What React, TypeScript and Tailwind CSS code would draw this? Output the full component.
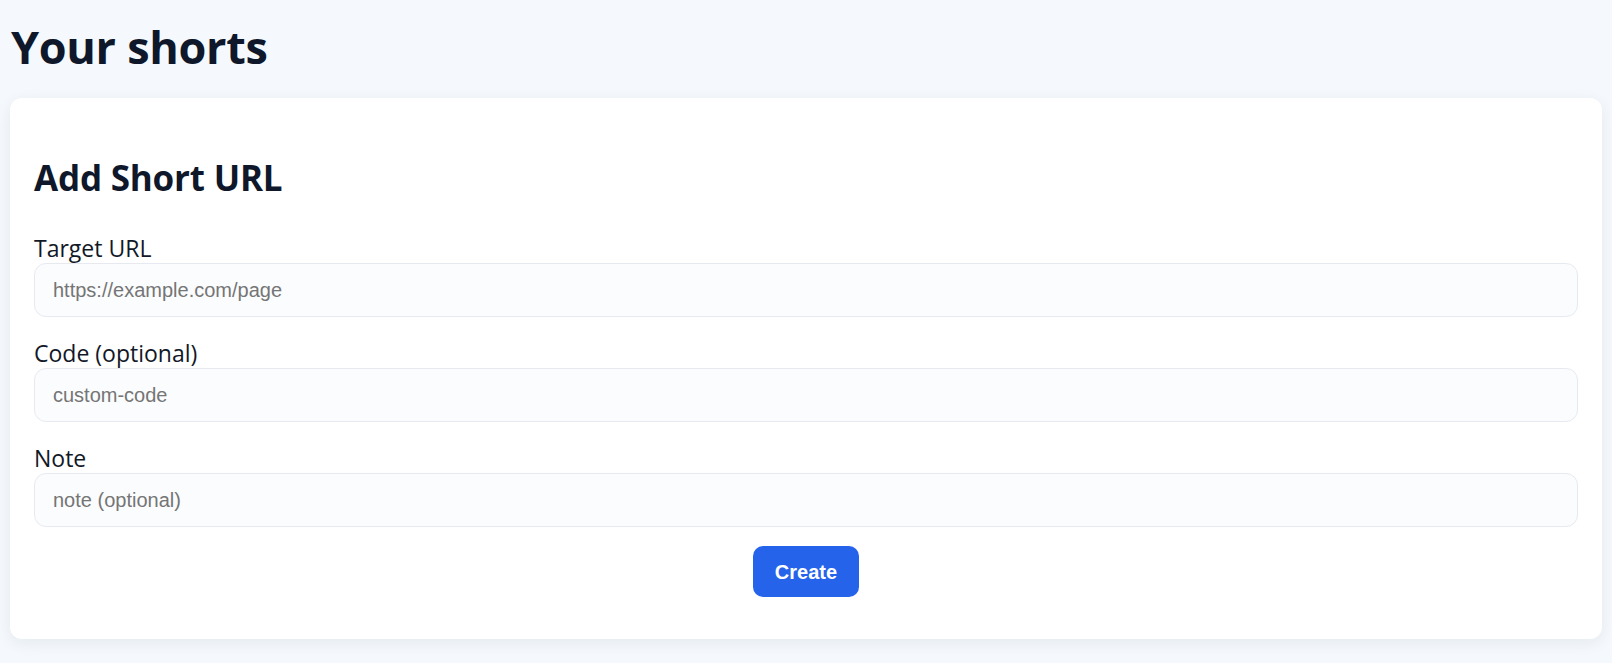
import { useState } from 'react';

const fields = [
  { id: 'target', label: 'Target URL', placeholder: 'https://example.com/page' },
  { id: 'code', label: 'Code (optional)', placeholder: 'custom-code' },
  { id: 'note', label: 'Note', placeholder: 'note (optional)' },
];

const App = () => {
  const [values, setValues] = useState<Record<string, string>>({ target: '', code: '', note: '' });

  return (
    <div className="min-h-screen bg-[#f5f9fd] px-[10px] pt-[20px] font-['Open_Sans',sans-serif] text-[#0f172a]">
      <h1 className="pl-[1px] text-[45px] font-bold leading-[54px] tracking-[-0.3px]">Your shorts</h1>

      <div className="mt-[24px] rounded-[12px] bg-white px-[24px] pt-[24px] pb-[42px] shadow-[0_4px_16px_rgba(15,23,42,0.07)]">
        <h2 className="mt-[35px] text-[35px] font-bold leading-[42px] tracking-[-0.2px]">Add Short URL</h2>

        <form className="mt-[34px] flex flex-col gap-[21px]" onSubmit={(e) => e.preventDefault()}>
          {fields.map((f) => (
            <div key={f.id} className="flex flex-col">
              <label htmlFor={f.id} className="text-[23px] leading-[30px] text-[#111827]">
                {f.label}
              </label>
              <input
                id={f.id}
                value={values[f.id]}
                onChange={(e) => setValues({ ...values, [f.id]: e.target.value })}
                placeholder={f.placeholder}
                className="h-[54px] rounded-[12px] border border-[#e6eaf0] bg-[#fbfcfe] px-[18px] font-['Liberation_Sans',Arial,sans-serif] text-[20px] text-[#111827] outline-none placeholder:text-[#757575]"
              />
            </div>
          ))}
        </form>

        <div className="mt-[19px] flex justify-center">
          <button
            type="submit"
            className="h-[51px] rounded-[10px] bg-[#2563eb] px-[22px] font-['Liberation_Sans',Arial,sans-serif] text-[20px] font-bold text-white"
          >
            Create
          </button>
        </div>
      </div>
    </div>
  );
};

export default App;
